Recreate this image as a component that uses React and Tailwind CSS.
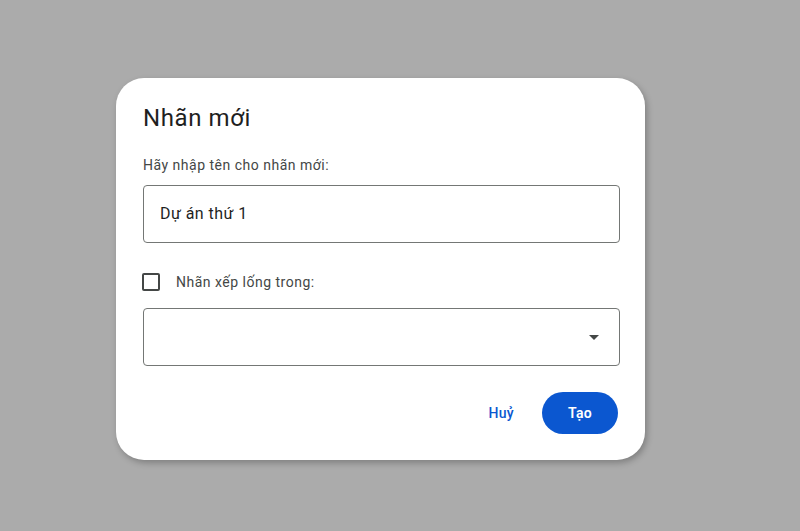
export default function App() {
  return (
    <div className="min-h-[531px] w-full bg-[#ababab] pt-[78px] pl-[116px] font-['Roboto','Liberation_Sans',sans-serif]">
      <div className="w-[529px] rounded-[28px] bg-white pl-[27px] pr-[25px] pt-[24px] pb-[26px] shadow-[2px_3px_6px_rgba(0,0,0,0.25)]">
        <h2 className="text-[24px] leading-[32px] tracking-[0.6px] text-[#1f1f1f]">Nhãn mới</h2>

        <p className="mt-[21px] text-[14px] leading-[20px] tracking-[0.5px] text-[#444746]">Hãy nhập tên cho nhãn mới:</p>

        <div className="mt-[10px] flex h-[58px] items-center rounded-[4px] border border-[#747775] px-[16px]">
          <span className="text-[16px] tracking-[0.45px] text-[#1f1f1f]">Dự án thứ 1</span>
        </div>

        <label className="mt-[27px] flex h-[24px] items-center">
          <span className="ml-[-1px] h-[18px] w-[18px] rounded-[2px] border-2 border-[#444746]" />
          <span className="ml-[16px] text-[14px] tracking-[0.5px] text-[#444746]">Nhãn xếp lống trong:</span>
        </label>

        <div className="mt-[14px] flex h-[58px] items-center justify-end rounded-[4px] border border-[#747775] pr-[20px]">
          <svg width="10" height="5" viewBox="0 0 10 5">
            <path d="M0 0 L10 0 L5 5 Z" fill="#444746" />
          </svg>
        </div>

        <div className="mt-[26px] flex items-center justify-end gap-[16px] pr-[2px]">
          <button className="h-[42px] px-[12px] text-[14px] font-medium tracking-[0.3px] text-[#0b57d0]">Huỷ</button>
          <button className="h-[42px] w-[76px] rounded-full bg-[#0b57d0] text-[14px] font-semibold tracking-[0.3px] text-white">Tạo</button>
        </div>
      </div>
    </div>
  );
}
